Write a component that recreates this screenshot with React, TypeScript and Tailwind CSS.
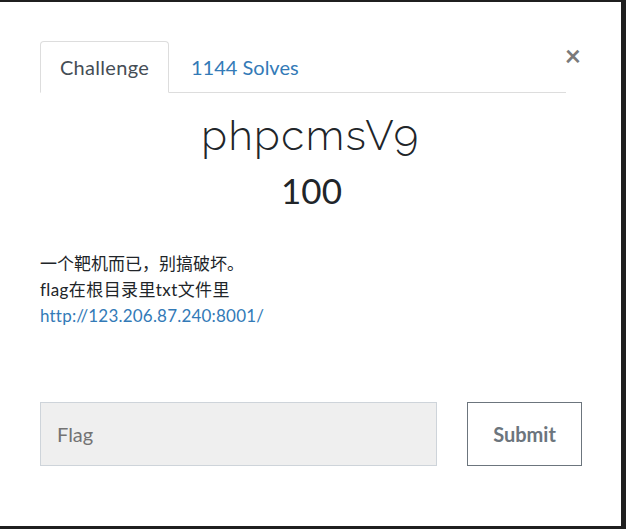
export default function App() {
  return (
    <div className="w-[626px] h-[529px] bg-[#1f1f1f] pt-[2px] pr-[5px] pb-[3px] overflow-hidden" style={{ fontFamily: 'Lato, "Noto Sans CJK SC", sans-serif' }}>
      <div className="h-full bg-white pt-[39px] pl-[40px] pr-[40px] relative">
        <button className="absolute right-[40px] top-[39px] text-[28px] leading-none font-bold text-[#7a7a7a]">×</button>
        <div className="flex w-[526px] border-b border-[#dddddd] h-[52px]">
          <div className="w-[129px] border border-[#dddddd] border-b-white rounded-t-[4px] -mb-px flex items-center justify-center text-[20px] tracking-[0.3px] text-[#454d55] bg-white">
            Challenge
          </div>
          <div className="pl-[22px] flex items-center text-[20px] text-[#337ab7]">1144 Solves</div>
        </div>
        <h1 className="text-center text-[42px] font-light tracking-[1.5px] text-[#212529] mt-[18px] leading-[50px]" style={{ fontFamily: 'Raleway, Lato, sans-serif' }}>
          phpcmsV9
        </h1>
        <div className="text-center text-[35px] text-[#212529] leading-[40px] mt-[9px] pl-[2px]">100</div>
        <div className="mt-[41px] text-[17px] leading-[26px] text-[#212529]">
          <p>一个靶机而已，别搞破坏。</p>
          <p className="tracking-[0.4px]">flag在根目录里txt文件里</p>
          <a className="text-[#337ab7] tracking-[0.2px]">http://123.206.87.240:8001/</a>
        </div>
        <div className="mt-[73px] flex">
          <input
            placeholder="Flag"
            className="shrink-0 w-[397px] h-[64px] bg-[#efefef] border border-[#ced4da] px-[16px] text-[20px] text-[#495057] placeholder:text-[#737373] outline-none"
          />
          <button className="shrink-0 ml-[30px] w-[115px] h-[64px] border border-[#6c757d] text-[20px] font-bold text-[#6c757d]">Submit</button>
        </div>
      </div>
    </div>
  );
}
